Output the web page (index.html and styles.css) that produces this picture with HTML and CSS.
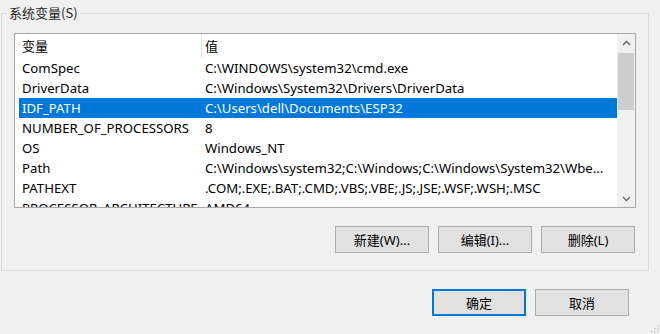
FILE: index.html
```html
<!DOCTYPE html>
<html lang="zh-CN">
<head>
<meta charset="utf-8">
<title>系统变量</title>
<link rel="stylesheet" href="styles.css">
</head>
<body>
<div class="dialog">
  <fieldset class="group">
    <legend class="group-label">系统变量(S)</legend>
    <div class="listbox">
      <div class="list-body">
        <div class="list-head">
          <div class="cell name">变量</div>
          <div class="cell value">值</div>
        </div>
        <div class="row"><div class="cell name">ComSpec</div><div class="cell value">C:\WINDOWS\system32\cmd.exe</div></div>
        <div class="row"><div class="cell name">DriverData</div><div class="cell value">C:\Windows\System32\Drivers\DriverData</div></div>
        <div class="row selected"><div class="cell name">IDF_PATH</div><div class="cell value">C:\Users\dell\Documents\ESP32</div></div>
        <div class="row"><div class="cell name">NUMBER_OF_PROCESSORS</div><div class="cell value">8</div></div>
        <div class="row"><div class="cell name">OS</div><div class="cell value">Windows_NT</div></div>
        <div class="row"><div class="cell name">Path</div><div class="cell value">C:\Windows\system32;C:\Windows;C:\Windows\System32\Wbe...</div></div>
        <div class="row"><div class="cell name">PATHEXT</div><div class="cell value">.COM;.EXE;.BAT;.CMD;.VBS;.VBE;.JS;.JSE;.WSF;.WSH;.MSC</div></div>
        <div class="row"><div class="cell name">PROCESSOR_ARCHITECTURE</div><div class="cell value">AMD64</div></div>
      </div>
      <div class="scrollbar">
        <div class="sb-btn">
          <svg width="9" height="6" viewBox="0 0 9 6"><path d="M1 5 L4.5 1.5 L8 5" fill="none" stroke="#606060" stroke-width="1.3"/></svg>
        </div>
        <div class="sb-track"><div class="sb-thumb"></div></div>
        <div class="sb-btn">
          <svg width="9" height="6" viewBox="0 0 9 6"><path d="M1 1 L4.5 4.5 L8 1" fill="none" stroke="#606060" stroke-width="1.3"/></svg>
        </div>
      </div>
    </div>
    <div class="button-row">
      <button class="btn">新建(W)...</button>
      <button class="btn">编辑(I)...</button>
      <button class="btn">删除(L)</button>
    </div>
  </fieldset>
  <div class="button-row footer">
    <button class="btn default">确定</button>
    <button class="btn">取消</button>
  </div>
  <svg class="grip" width="9" height="9" viewBox="0 0 9 9">
    <rect x="7" y="1" width="1.5" height="1.5" fill="#c4c4c4"/>
    <rect x="4" y="4" width="1.5" height="1.5" fill="#c4c4c4"/>
    <rect x="7" y="4" width="1.5" height="1.5" fill="#c4c4c4"/>
    <rect x="1" y="7" width="1.5" height="1.5" fill="#c4c4c4"/>
    <rect x="4" y="7" width="1.5" height="1.5" fill="#c4c4c4"/>
    <rect x="7" y="7" width="1.5" height="1.5" fill="#c4c4c4"/>
  </svg>
</div>
</body>
</html>
```
FILE: styles.css
```css
html, body {
  margin: 0;
  padding: 0;
}
body {
  background: #f0f0f0;
  font-family: "Noto Sans", "Noto Sans CJK SC", sans-serif;
  font-size: 13px;
  color: #000;
}
.dialog {
  position: relative;
  width: 660px;
  height: 334px;
  overflow: hidden;
}
.group {
  box-sizing: border-box;
  width: 648px;
  margin: 5px 0 0 1px;
  padding: 0 12px 17px 12px;
  border: 1px solid #dadada;
  min-width: 0;
}
.group-label {
  margin-left: -7px;
  padding: 0 2px;
  line-height: 16px;
  height: 16px;
  color: #1e1e1e;
  font-family: "Noto Sans CJK SC", "Noto Sans", sans-serif;
}
.listbox {
  box-sizing: border-box;
  margin-top: 12px;
  width: 622px;
  height: 175px;
  border: 1px solid #a8a8a8;
  background: #fff;
  display: flex;
  overflow: hidden;
}
.list-body {
  flex: 1;
  padding-left: 4px;
  overflow: hidden;
}
.list-head {
  display: flex;
  height: 24px;
  align-items: center;
}
.list-head .cell {
  font-family: "Noto Sans CJK SC", "Noto Sans", sans-serif;
  height: 24px;
  line-height: 24px;
}
.list-head .name {
  border-right: 1px solid #e5e5e5;
}
.row {
  display: flex;
  height: 20px;
  line-height: 21px;
  font-size: 13.2px;
}
.cell {
  box-sizing: border-box;
  padding-left: 3px;
  white-space: nowrap;
  overflow: hidden;
}
.cell.name {
  width: 183px;
  flex: none;
}
.cell.value {
  flex: 1;
}
.row.selected {
  background: #0078d7;
  color: #fff;
}
.scrollbar {
  width: 18px;
  flex: none;
  background: #f0f0f0;
  display: flex;
  flex-direction: column;
}
.sb-btn {
  height: 17px;
  display: flex;
  align-items: center;
  justify-content: center;
  flex: none;
}
.sb-track {
  flex: 1;
  padding: 2px 1px 0 1px;
}
.sb-thumb {
  height: 57px;
  background: #cdcdcd;
}
.button-row {
  display: flex;
  justify-content: flex-end;
  gap: 9px;
  margin-top: 18px;
  margin-right: 1px;
}
.btn {
  box-sizing: border-box;
  width: 94px;
  height: 27px;
  margin: 0;
  padding: 0;
  border: 1px solid #adadad;
  background: #e1e1e1;
  font-family: "Noto Sans", "Noto Sans CJK SC", sans-serif;
  font-size: 13px;
  color: #000;
}
.btn.default {
  border: 2px solid #0078d7;
}
.footer {
  margin-top: 18px;
  margin-right: 31px;
}
.grip {
  position: absolute;
  right: 1px;
  bottom: 1px;
}
```
